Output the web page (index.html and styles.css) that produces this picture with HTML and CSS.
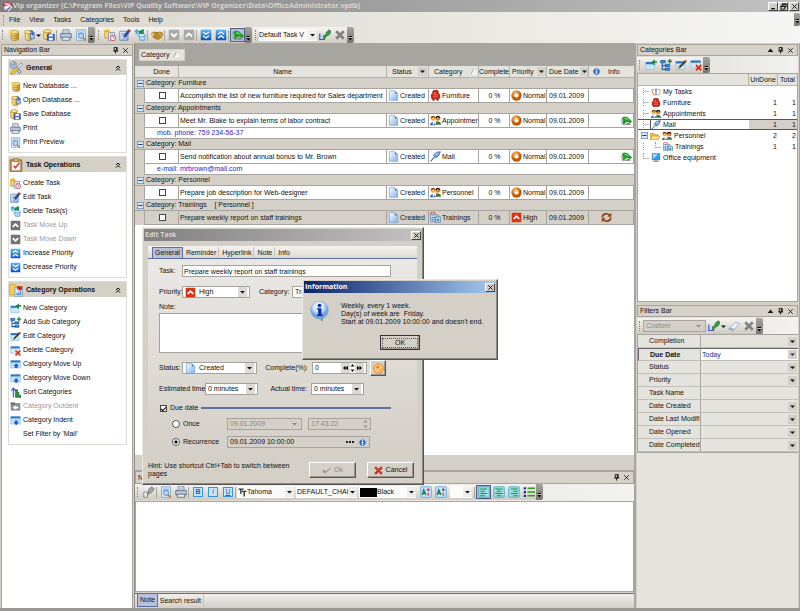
FILE: index.html
```html
<!DOCTYPE html>
<html lang="en">
<head>
    <meta charset="UTF-8">
    <meta name="viewport" content="width=device-width, initial-scale=1.0">
    <title>Vip organizer</title>
    <link rel="stylesheet" href="styles.css">
</head>
<body>
<!-- icon sprite -->
<svg class="sprite" xmlns="http://www.w3.org/2000/svg">
    <defs>
        <linearGradient id="gBlue" x1="0" y1="0" x2="0" y2="1"><stop offset="0" stop-color="#5db4f4"/><stop offset="1" stop-color="#0a51c4"/></linearGradient>
        <linearGradient id="gPage" x1="0" y1="0" x2="1" y2="1"><stop offset="0" stop-color="#ffffff"/><stop offset="1" stop-color="#7fb2ea"/></linearGradient>
        <linearGradient id="gYellow" x1="0" y1="0" x2="1" y2="0"><stop offset="0" stop-color="#fff0a0"/><stop offset="1" stop-color="#c98a14"/></linearGradient>
        <radialGradient id="gOrange" cx=".4" cy=".3"><stop offset="0" stop-color="#ffc070"/><stop offset="1" stop-color="#c55a00"/></radialGradient>
        <radialGradient id="gBall" cx=".45" cy=".3"><stop offset="0" stop-color="#ffffff"/><stop offset=".6" stop-color="#cfe4f8"/><stop offset="1" stop-color="#6fa3dc"/></radialGradient>
    </defs>
    <symbol id="logo" viewBox="0 0 16 16"><path d="M1 3l8-2 6 5-5 4-8-2z" fill="#d8304a"/><path d="M3 8l8-3 4 4-5 6-6-2z" fill="#e8e4ea"/><path d="M4 4l7 1M5 9l6 2" stroke="#fff" stroke-width="2"/><path d="M6 14l6-5" stroke="#5b62b5" stroke-width="2"/></symbol>
    <symbol id="db" viewBox="0 0 16 16"><path d="M4 4v9c0 3 10 3 10 0V4z" fill="url(#gYellow)" stroke="#b07c15"/><ellipse cx="9" cy="4" rx="5" ry="2" fill="#fff2b4" stroke="#b07c15"/><path d="M4 8c1 2 9 2 10 0M4 11c1 2 9 2 10 0" fill="none" stroke="#b07c15"/><path d="M4 0l1 3 3 1-3 1-1 3-1-3-3-1 3-1z" fill="#ffc928"/></symbol>
    <symbol id="dbopen" viewBox="0 0 16 16"><path d="M3 4v9c0 3 9 3 9 0V4z" fill="url(#gYellow)" stroke="#b07c15"/><ellipse cx="7" cy="4" rx="5" ry="2" fill="#fff2b4" stroke="#b07c15"/><path d="M10 6h5v7h-5z" fill="#b8d2f2" stroke="#3b66a8"/><path d="M8 4c3-4 6-2 6 1l2-1-3 5-3-4h2c0-2-2-2-4-1z" fill="#2f67bd"/></symbol>
    <symbol id="dbsave" viewBox="0 0 16 16"><path d="M1 3v9c0 3 9 3 9 0V3z" fill="url(#gYellow)" stroke="#b07c15"/><ellipse cx="6" cy="3" rx="5" ry="2" fill="#fff2b4" stroke="#b07c15"/><path d="M6 7h9v8H6z" fill="#4b6fd0" stroke="#233f92"/><path d="M8 7h5v3H8zM8 12h5v3H8z" fill="#fff"/></symbol>
    <symbol id="print" viewBox="0 0 16 16"><path d="M4 1h8v6H4z" fill="#fff" stroke="#5a6b85"/><path d="M1 6h14v6H1z" fill="#b9c6da" stroke="#4f6078"/><path d="M3 11h10v4H3z" fill="#e8f0fa" stroke="#4f6078"/><path d="M5 3h6M5 5h6" stroke="#8da2c0"/></symbol>
    <symbol id="preview" viewBox="0 0 16 16"><path d="M2 1h12v14H2z" fill="#d8eafc" stroke="#7a9bc5"/><path d="M4 4h8M4 6h8" stroke="#7fa5d5"/><circle cx="8" cy="9" r="3.5" fill="#b4dcff" stroke="#3f72b4"/><path d="M10.500 11.500l4 4" stroke="#c77a2f" stroke-width="2"/></symbol>
    <symbol id="newtask" viewBox="0 0 16 16"><path d="M1 3h6l1 2h5v7H1z" fill="#ffd968" stroke="#c29321"/><path d="M6 5h8v10H6z" fill="#e4eefb" stroke="#6d86bc"/><path d="M8 8h4M8 10h4" stroke="#7c95ce"/><circle cx="12" cy="12" r="3.500" fill="#fff" stroke="#d02b3b"/><path d="M12 10v2h2" stroke="#d02b3b" fill="none"/><path d="M4 0v5M1 2h6" stroke="#ffb300" stroke-width="1.500"/></symbol>
    <symbol id="edittask" viewBox="0 0 16 16"><path d="M1 3h11v12H1z" fill="url(#gPage)" stroke="#4d79b8"/><path d="M3 6h6M3 8h5" stroke="#6a96d4"/><path d="M5 13l1-4 6-8 3 2-6 8z" fill="#2e4c8d"/><path d="M12 1l1-1 3 2-1 2z" fill="#e0442e"/><path d="M5 13l1-3 2 1z" fill="#ffdfa0"/></symbol>
    <symbol id="deltask" viewBox="0 0 16 16"><path d="M6 8h9l-1 7H8z" fill="#b7dcfa" stroke="#4c8dcc"/><ellipse cx="10" cy="8" rx="5" ry="2" fill="#e4f4ff" stroke="#4c8dcc"/><path d="M0 3l4-3 3 3-2 1v3H2V4z" fill="#48a8e8"/><path d="M6 3l7-3v7l-3-1-3 1z" fill="#1d8a3f"/></symbol>
    <symbol id="shake" viewBox="0 0 16 16"><path d="M0 6l4-2 4 1 4-1 4 2-3 6-4 2-6-3z" fill="#d9a13a" stroke="#8a5d14"/><path d="M5 7l3-1 4 4M4 9l4 3M7 8l4 4" stroke="#7a4c10" fill="none"/><path d="M0 6l3-1v5l-2-1z" fill="#f2d474"/></symbol>
    <symbol id="gdown" viewBox="0 0 16 16"><rect x="1" y="1" width="14" height="14" rx="1" fill="#a9a9a9"/><path d="M4 6l4 4 4-4" fill="none" stroke="#fff" stroke-width="2.500"/></symbol>
    <symbol id="gup" viewBox="0 0 16 16"><rect x="1" y="1" width="14" height="14" rx="1" fill="#a9a9a9"/><path d="M4 10l4-4 4 4" fill="none" stroke="#fff" stroke-width="2.500"/></symbol>
    <symbol id="ddown" viewBox="0 0 16 16"><rect x="1" y="1" width="14" height="14" rx="1" fill="#737373"/><path d="M4 6l4 4 4-4" fill="none" stroke="#fff" stroke-width="2.500"/></symbol>
    <symbol id="dup" viewBox="0 0 16 16"><rect x="1" y="1" width="14" height="14" rx="1" fill="#737373"/><path d="M4 10l4-4 4 4" fill="none" stroke="#fff" stroke-width="2.500"/></symbol>
    <symbol id="bdown" viewBox="0 0 16 16"><rect x="1" y="1" width="14" height="14" rx="1" fill="url(#gBlue)"/><path d="M4 4l4 3 4-3M4 9l4 3 4-3" fill="none" stroke="#fff" stroke-width="1.700"/></symbol>
    <symbol id="bup" viewBox="0 0 16 16"><rect x="1" y="1" width="14" height="14" rx="1" fill="url(#gBlue)"/><path d="M4 7l4-3 4 3M4 12l4-3 4 3" fill="none" stroke="#fff" stroke-width="1.700"/></symbol>
    <symbol id="noteflag" viewBox="0 0 16 16"><path d="M3 14h11l-2-3z" fill="#777"/><path d="M1 13V5l3-3 5 1 7 6-2 3-4-2-3 1-3 3z" fill="#1f9a2c"/><path d="M4 5l4-1 4 4-4-1z" fill="#6fd36a"/><path d="M1 6h2v8H1z" fill="#b8b8b8"/></symbol>
    <symbol id="viewsave" viewBox="0 0 16 16"><path d="M1 6v8h6v-4" fill="#c9d6fa" stroke="#4451b8" stroke-width="1.500"/><path d="M6 9l3-1 1-4 4-3 2 3-3 4-4 2-2 4z" fill="#35a046" stroke="#1c6b2a"/></symbol>
    <symbol id="xgray" viewBox="0 0 16 16"><path d="M3 3l10 10M13 3L3 13" stroke="#808080" stroke-width="3.500"/></symbol>
    <symbol id="xred" viewBox="0 0 16 16"><path d="M2 2l12 12M14 2L2 14" stroke="#d9260e" stroke-width="4"/><path d="M4 3l9 9" stroke="#ff7a55"/></symbol>
    <symbol id="check" viewBox="0 0 16 16"><path d="M1 9l4 4L15 4l-9 6-3-3z" fill="#8c8c8c" stroke="#8c8c8c"/></symbol>
    <symbol id="close" viewBox="0 0 16 16"><path d="M3 3l10 10M13 3L3 13" stroke="currentColor" stroke-width="2"/></symbol>
    <symbol id="pin" viewBox="0 0 16 16"><path d="M5 1h7v8H5zM3 9h11M8 9v6M10 1v8" fill="none" stroke="currentColor" stroke-width="2"/></symbol>
    <symbol id="min" viewBox="0 0 16 16"><path d="M3 13h8" stroke="#000" stroke-width="3"/></symbol>
    <symbol id="restore" viewBox="0 0 16 16"><path d="M5 6V2h9v7h-3M2 7h9v7H2zM2 8h9M5 3h9" fill="none" stroke="#000" stroke-width="2"/></symbol>
    <symbol id="down" viewBox="0 0 10 10"><path d="M0 3h10L5 8z" fill="currentColor"/></symbol>
    <symbol id="up" viewBox="0 0 10 10"><path d="M1 7h8L5 2z" fill="currentColor"/></symbol>
    <symbol id="more" viewBox="0 0 10 10"><path d="M1 1h8v2H1z" fill="#fff"/><path d="M1 0h7v2H1zM1 4h7L5 9z" fill="#000"/></symbol>
    <symbol id="asc" viewBox="0 0 16 16"><path d="M2 13L8 2l6 11z" fill="#efeeea" stroke="#fff" stroke-width="2"/><path d="M2 14L8 2" stroke="#9d9c97" stroke-width="2"/></symbol>
    <symbol id="chev" viewBox="0 0 16 16"><path d="M4 8l4-4 4 4M4 13l4-4 4 4" fill="none" stroke="#000" stroke-width="2"/></symbol>
    <symbol id="page" viewBox="0 0 16 16"><path d="M2 1h8l4 4v10H2z" fill="url(#gPage)" stroke="#6f9fd8"/><path d="M10 1v4h4z" fill="#4d86cc"/></symbol>
    <symbol id="furniture" viewBox="0 0 16 16"><path d="M4 2c0-2 8-2 8 0v4h2v6h-2v3h-2v-2H6v2H4v-3H2V6h2z" fill="#d62218" stroke="#941109"/><path d="M5 7h6M5 10h6" stroke="#ff9d86"/><path d="M6 3h2v2H6z" fill="#ff8c76"/></symbol>
    <symbol id="users" viewBox="0 0 16 16"><circle cx="4.500" cy="5" r="3.500" fill="#f4b255"/><path d="M1 5c0-5 7-5 7 0l-3-2z" fill="#7b3c10"/><path d="M0 15c0-6 8-6 8 0z" fill="#2f62d0"/><circle cx="11.500" cy="5" r="3.500" fill="#d08c3a"/><path d="M8 5c0-5 7-5 7 0l-3-2z" fill="#161616"/><path d="M8 14c0-6 8-6 8 0z" fill="#238037"/><path d="M4 9l3 4-3 1z" fill="#fff"/><path d="M8 9l3 0-1 3z" fill="#e23c2d"/></symbol>
    <symbol id="mail" viewBox="0 0 16 16"><path d="M1 15l6-7" stroke="#365da3" stroke-width="1.500"/><path d="M5 6l4-4 6-1-2 5-4 4z" fill="#6fa6e8" stroke="#24509c"/><path d="M8 5l4-2" stroke="#fff"/></symbol>
    <symbol id="training" viewBox="0 0 16 16"><path d="M1 4h9v10H1z" fill="#fff" stroke="#4278c4"/><path d="M1 8h9M4 4v10M7 4v10M1 11h9" stroke="#4278c4"/><path d="M1 4c0-5 6-5 6-1" fill="none" stroke="#d64545" stroke-width="1.500"/><path d="M8 7h7v8H8z" fill="#bfdcf8" stroke="#3a6fb5"/><path d="M10 10h3v3h-3z" fill="#2c9e55"/><path d="M9 2l5 3-4 1z" fill="#e8a042"/></symbol>
    <symbol id="monitor" viewBox="0 0 16 16"><path d="M2 1h12v10H2z" fill="#2f9be6" stroke="#50657b"/><path d="M3 2h8L4 9z" fill="#a6e0ff"/><path d="M5 12h6l2 3H3z" fill="#8a99aa"/></symbol>
    <symbol id="mytasks" viewBox="0 0 16 16"><path d="M1 4l5 0 2 3 2-3h5l-2 9-4-1-4 1z" fill="#fff" stroke="#d08a3d"/><path d="M8 2v11" stroke="#5f8fd0" stroke-width="2"/><path d="M1 5l3 8" stroke="#e9a04f" stroke-width="1.500"/></symbol>
    <symbol id="folder" viewBox="0 0 16 16"><path d="M1 4h5l1 2h6v8H1z" fill="#f0bf3c" stroke="#b98714"/><path d="M3 8h13l-3 6H1z" fill="#ffe58a" stroke="#c99a22"/></symbol>
    <symbol id="normal" viewBox="0 0 16 16"><circle cx="8" cy="8" r="7.500" fill="url(#gOrange)"/><circle cx="8" cy="8" r="3" fill="#fff"/></symbol>
    <symbol id="high" viewBox="0 0 16 16"><rect x="1" y="1" width="14" height="14" rx="1" fill="#de3313"/><path d="M4 10l4-4 4 4" fill="none" stroke="#fff" stroke-width="2.500"/></symbol>
    <symbol id="info" viewBox="0 0 16 16"><path d="M8 0l8 8-8 8-8-8z" fill="#a8c8ee"/><circle cx="8" cy="8" r="5.500" fill="#2a6bc8"/><path d="M8 6v6M8 3v2" stroke="#fff" stroke-width="2.500"/></symbol>
    <symbol id="recur" viewBox="0 0 16 16"><path d="M2 8c0-6 8-7 11-3M14 8c0 6-8 7-11 3" fill="none" stroke="#8a4312" stroke-width="2.500"/><path d="M15 1v6H9zM1 15V9h6z" fill="#8a4312"/></symbol>
    <symbol id="cnew" viewBox="0 0 16 16"><path d="M1 5h12v9H1z" fill="#c8e8fc" stroke="#8fc0e6"/><path d="M1 4h11v3H1z" fill="#2d78c8"/><path d="M12 1v7M9 4h7" stroke="#1c8a2b" stroke-width="2"/></symbol>
    <symbol id="csub" viewBox="0 0 16 16"><path d="M1 2h6v3H1zM7 7h6v3H7zM7 12h6v3H7z" fill="#3b8ae0" stroke="#1a55a4"/><path d="M3 5v9h4M3 9h4" fill="none" stroke="#1a55a4" stroke-width="1.500"/><path d="M13 0v6M10 3h6" stroke="#1c8a2b" stroke-width="2"/></symbol>
    <symbol id="cedit" viewBox="0 0 16 16"><path d="M1 4h12v10H1z" fill="#c8e8fc" stroke="#8fc0e6"/><path d="M1 3h11v3H1z" fill="#2d78c8"/><path d="M5 12l9-9" stroke="#47372a" stroke-width="2.500"/><path d="M13 4l2-2" stroke="#d9342a" stroke-width="3"/><path d="M3 14l2-4 2 2z" fill="#f0b040"/></symbol>
    <symbol id="cdel" viewBox="0 0 16 16"><path d="M1 3h13v9H1z" fill="#d4ecfc" stroke="#8fc0e6"/><path d="M1 2h13v3H1z" fill="#2d78c8"/><path d="M8 8l7 7M15 8l-7 7" stroke="#e0311c" stroke-width="2.500"/></symbol>
    <symbol id="cup" viewBox="0 0 16 16"><path d="M1 3h14v10H1z" fill="#c4e2fb" stroke="#8fc0e6"/><path d="M1 2h14v3H1z" fill="#2d78c8"/><path d="M9 6l4 4h-2v3H7v-3H5z" fill="#1c5fd0"/></symbol>
    <symbol id="cdown" viewBox="0 0 16 16"><path d="M1 3h14v10H1z" fill="#c4e2fb" stroke="#8fc0e6"/><path d="M1 2h14v3H1z" fill="#2d78c8"/><path d="M9 15l4-4h-2V8H7v3H5z" fill="#1c5fd0"/></symbol>
    <symbol id="sort" viewBox="0 0 16 16"><path d="M4 15V5H1l4-5 4 5H6v10z" fill="#3c6fd8"/><path d="M8 4h3v3H8zM8 8h5v3H8zM8 12h8v3H8z" fill="#2b9c3d" stroke="#14641f"/></symbol>
    <symbol id="cout" viewBox="0 0 16 16"><path d="M1 3h14v11H1z" fill="#8e8e8e"/><path d="M1 2h6v3H1z" fill="#6b6b6b"/><path d="M4 9l4-3v2h4v3H8v2z" fill="#fff"/></symbol>
    <symbol id="tools" viewBox="0 0 24 24"><path d="M3 3l4 4 3-3-4-3c5-1 8 3 6 7l9 10-3 4L8 12C4 14 0 9 3 3z" fill="#a9bddb" stroke="#536b96"/><path d="M14 10l7-7 2 3-7 7z" fill="#dfe6f1" stroke="#5e6f8d"/><path d="M13 11l3 3-9 9c-3 1-5-2-3-4z" fill="#f5c22f" stroke="#a97a10"/></symbol>
    <symbol id="clip" viewBox="0 0 24 24"><path d="M2 3h20v20H2z" fill="#c08b3a" stroke="#7d5518"/><path d="M5 6h14v15H5z" fill="#fbfbff" stroke="#bbb"/><path d="M8 1h8v5H8z" fill="#e3b85c" stroke="#7d5518"/><path d="M8 13l3 4 7-9" fill="none" stroke="#d8262b" stroke-width="2.500"/></symbol>
    <symbol id="catbig" viewBox="0 0 24 24"><path d="M1 3h9l2 3h9v14H1z" fill="#f7cf57" stroke="#c29321"/><path d="M10 8h13v15H10z" fill="#d4e6fa" stroke="#5f86bd"/><path d="M13 17h4v4h-4zM18 14h3v7h-3z" fill="#4b8ede"/><path d="M14 5l5 1 4-1-1 7-4 1-4-3z" fill="#cf2417"/></symbol>
    <symbol id="eraser" viewBox="0 0 16 16"><path d="M1 12l9-9 5 2-8 9z" fill="#eef2fa" stroke="#8899bb"/><path d="M1 12l6 2 1-2-5-2z" fill="#8fa7d8"/></symbol>
    <symbol id="stamp" viewBox="0 0 16 16"><path d="M1 8l5 0v7H1z" fill="#e8e8e8" stroke="#777"/><path d="M6 12l2-8 4-3 3 3-4 5-3 1z" fill="#a8a8a8" stroke="#666"/></symbol>
    <symbol id="fontt" viewBox="0 0 16 16"><path d="M1 2h9M5 2v8M7 6h8M11 6v9" stroke="#333" stroke-width="2.500"/></symbol>
    <symbol id="grow" viewBox="0 0 16 16"><rect x="1" y="1" width="14" height="14" rx="1" fill="#c5e8fb" stroke="#4a9bd6"/><path d="M3 12l2-7 3 7M4 10h3" stroke="#126b35" fill="none" stroke-width="1.500"/><path d="M11 3v4M9 5h4M11 9v4" stroke="#c02a3a" stroke-width="1.500"/></symbol>
    <symbol id="alignl" viewBox="0 0 16 16"><rect x="1" y="1" width="14" height="14" rx="1" fill="#9fe0dc" stroke="#3a9bd0"/><path d="M3 4h9M3 7h6M3 10h9M3 13h6" stroke="#15904a" stroke-width="1.600"/></symbol>
    <symbol id="alignc" viewBox="0 0 16 16"><rect x="1" y="1" width="14" height="14" rx="1" fill="#9fe0dc" stroke="#3a9bd0"/><path d="M3 4h10M5 7h6M3 10h10M5 13h6" stroke="#15904a" stroke-width="1.600"/></symbol>
    <symbol id="alignr" viewBox="0 0 16 16"><rect x="1" y="1" width="14" height="14" rx="1" fill="#9fe0dc" stroke="#3a9bd0"/><path d="M4 4h9M7 7h6M4 10h9M7 13h6" stroke="#15904a" stroke-width="1.600"/></symbol>
    <symbol id="list" viewBox="0 0 16 16"><path d="M1 3h3M1 8h3M1 13h3" stroke="#1b2c9c" stroke-width="3"/><path d="M6 3h10M6 8h10M6 13h10" stroke="#2f9a1f" stroke-width="2"/></symbol>
    <symbol id="bigi" viewBox="0 0 32 32"><path d="M16 24l4 8 2-9z" fill="#5d7fae"/><circle cx="16" cy="14" r="13.500" fill="url(#gBall)" stroke="#86a9d2"/><path d="M12 11h7v10h2v2h-9v-2h2v-8h-2z" fill="#0d2f9c"/><circle cx="16" cy="7" r="2.800" fill="#0d2f9c"/></symbol>
    <symbol id="done" viewBox="0 0 16 16"><circle cx="8" cy="8" r="7.500" fill="#f08a24"/><circle cx="8" cy="8" r="5" fill="none" stroke="#ffe0b0" stroke-width="1.500"/><path d="M5 8l2 3 5-6" stroke="#fff" fill="none" stroke-width="1.500"/></symbol>
    <symbol id="spin" viewBox="0 0 10 20"><path d="M1 7h8L5 2zM1 13h8l-4 5z" fill="currentColor"/></symbol>
    <symbol id="prev" viewBox="0 0 16 16"><path d="M8 1v14L0 8zM16 1v14L8 8z" fill="#000"/></symbol>
    <symbol id="next" viewBox="0 0 16 16"><path d="M0 1v14l8-7zM8 1v14l8-7z" fill="#000"/></symbol>
    <symbol id="minus" viewBox="0 0 10 10"><rect x=".5" y=".5" width="9" height="9" fill="#d9e7fa" stroke="#5b83bd"/><path d="M2 5h6" stroke="#17428f" stroke-width="1.500"/></symbol>
</svg>

<div class="app">
    <header class="titlebar">
        <svg class="icon"><use href="#logo"/></svg>
        <h1 class="titlebar-text">Vip organizer [C:\Program Files\VIP Quality Software\VIP Organizer\Data\OfficeAdministrator.vpdb]</h1>
        <button class="win-btn" aria-label="Minimize"><svg><use href="#min"/></svg></button>
        <button class="win-btn" aria-label="Restore"><svg><use href="#restore"/></svg></button>
        <button class="win-btn win-close" aria-label="Close"><svg><use href="#close"/></svg></button>
    </header>

    <div class="topbars">
        <nav class="menu">
            <span class="grip"></span>
            <button>File</button>
            <button>View</button>
            <button>Tasks</button>
            <button>Categories</button>
            <button>Tools</button>
            <button>Help</button>
            <span class="overflow menu-overflow"><svg><use href="#more"/></svg></span>
        </nav>
        <div class="toolbars">
            <div class="toolbar">
                <span class="grip"></span>
                <button aria-label="New database"><svg class="icon"><use href="#db"/></svg></button>
                <button aria-label="Open database"><svg class="icon"><use href="#dbopen"/></svg></button>
                <svg class="arrow"><use href="#down"/></svg>
                <button aria-label="Save database"><svg class="icon"><use href="#dbsave"/></svg></button>
                <span class="sep"></span>
                <button aria-label="Print"><svg class="icon"><use href="#print"/></svg></button>
                <button aria-label="Print preview"><svg class="icon"><use href="#preview"/></svg></button>
                <span class="overflow"><svg><use href="#more"/></svg></span>
            </div>
            <div class="toolbar">
                <span class="grip"></span>
                <button aria-label="Create task"><svg class="icon"><use href="#newtask"/></svg></button>
                <button aria-label="Edit task"><svg class="icon"><use href="#edittask"/></svg></button>
                <button aria-label="Delete task"><svg class="icon"><use href="#deltask"/></svg></button>
                <span class="sep"></span>
                <button aria-label="Assign"><svg class="icon"><use href="#shake"/></svg></button>
                <span class="sep"></span>
                <button aria-label="Move down"><svg class="icon"><use href="#gdown"/></svg></button>
                <button aria-label="Move up"><svg class="icon"><use href="#gup"/></svg></button>
                <span class="sep"></span>
                <button aria-label="Decrease priority"><svg class="icon"><use href="#bdown"/></svg></button>
                <button aria-label="Increase priority"><svg class="icon"><use href="#bup"/></svg></button>
                <span class="sep"></span>
                <button class="on" aria-label="Show notes"><svg class="icon"><use href="#noteflag"/></svg></button>
                <span class="overflow"><svg><use href="#more"/></svg></span>
            </div>
            <div class="toolbar">
                <span class="grip"></span>
                <div class="combo flat view-combo">
                    <select aria-label="View"><option>Default Task V</option></select>
                    <svg class="arrow"><use href="#down"/></svg>
                </div>
                <button aria-label="Save view"><svg class="icon"><use href="#viewsave"/></svg></button>
                <button aria-label="Delete view"><svg class="icon"><use href="#xgray"/></svg></button>
                <span class="overflow"><svg><use href="#more"/></svg></span>
            </div>
        </div>
    </div>

    <div class="workspace">
        <aside class="nav">
            <div class="panel-head">
                <h2>Navigation Bar</h2>
                <svg class="mini"><use href="#pin"/></svg>
                <svg class="mini"><use href="#close"/></svg>
            </div>
            <div class="nav-body">
                <section class="nav-group">
                    <h3><svg><use href="#tools"/></svg><span>General</span><svg class="chev"><use href="#chev"/></svg></h3>
                    <ul>
                        <li><svg class="icon"><use href="#db"/></svg><a href="#">New Database ...</a></li>
                        <li><svg class="icon"><use href="#dbopen"/></svg><a href="#">Open Database ...</a></li>
                        <li><svg class="icon"><use href="#dbsave"/></svg><a href="#">Save Database</a></li>
                        <li><svg class="icon"><use href="#print"/></svg><a href="#">Print</a></li>
                        <li><svg class="icon"><use href="#preview"/></svg><a href="#">Print Preview</a></li>
                    </ul>
                </section>
                <section class="nav-group">
                    <h3><svg><use href="#clip"/></svg><span>Task Operations</span><svg class="chev"><use href="#chev"/></svg></h3>
                    <ul>
                        <li><svg class="icon"><use href="#newtask"/></svg><a href="#">Create Task</a></li>
                        <li><svg class="icon"><use href="#edittask"/></svg><a href="#">Edit Task</a></li>
                        <li><svg class="icon"><use href="#deltask"/></svg><a href="#">Delete Task(s)</a></li>
                        <li class="off"><svg class="icon"><use href="#dup"/></svg><a href="#">Task Move Up</a></li>
                        <li class="off"><svg class="icon"><use href="#ddown"/></svg><a href="#">Task Move Down</a></li>
                        <li><svg class="icon"><use href="#bup"/></svg><a href="#">Increase Priority</a></li>
                        <li><svg class="icon"><use href="#bdown"/></svg><a href="#">Decrease Priority</a></li>
                    </ul>
                </section>
                <section class="nav-group">
                    <h3><svg><use href="#catbig"/></svg><span>Category Operations</span><svg class="chev"><use href="#chev"/></svg></h3>
                    <ul>
                        <li><svg class="icon"><use href="#cnew"/></svg><a href="#">New Category</a></li>
                        <li><svg class="icon"><use href="#csub"/></svg><a href="#">Add Sub Category</a></li>
                        <li><svg class="icon"><use href="#cedit"/></svg><a href="#">Edit Category</a></li>
                        <li><svg class="icon"><use href="#cdel"/></svg><a href="#">Delete Category</a></li>
                        <li><svg class="icon"><use href="#cup"/></svg><a href="#">Category Move Up</a></li>
                        <li><svg class="icon"><use href="#cdown"/></svg><a href="#">Category Move Down</a></li>
                        <li><svg class="icon"><use href="#sort"/></svg><a href="#">Sort Categories</a></li>
                        <li class="off"><svg class="icon"><use href="#cout"/></svg><a href="#">Category Outdent</a></li>
                        <li><svg class="icon"><use href="#cdown"/></svg><a href="#">Category Indent</a></li>
                        <li><svg class="icon"></svg><a href="#">Set Filter by 'Mail'</a></li>
                    </ul>
                </section>
            </div>
        </aside>

        <main class="center">
            <div class="grouping"><button class="group-chip">Category <svg class="mini"><use href="#asc"/></svg></button></div>
            <div class="grid-area">
                <table class="tasks">
                    <colgroup>
                        <col class="c-indent"><col class="c-done"><col><col class="c-status"><col class="c-cat">
                        <col class="c-comp"><col class="c-prio"><col class="c-due"><col class="c-info">
                    </colgroup>
                    <thead>
                        <tr>
                            <th></th>
                            <th>Done</th>
                            <th>Name</th>
                            <th><div class="cell spread">Status<svg class="drop"><use href="#down"/></svg></div></th>
                            <th><div class="cell spread">Category<svg class="mini"><use href="#asc"/></svg></div></th>
                            <th>Complete</th>
                            <th><div class="cell spread tight">Priority<svg class="drop"><use href="#down"/></svg></div></th>
                            <th><div class="cell spread tight">Due Date<svg class="drop"><use href="#down"/></svg></div></th>
                            <th><div class="cell info-head"><svg class="small"><use href="#info"/></svg>Info</div></th>
                        </tr>
                    </thead>
                    <tbody>
                        <tr class="group"><td colspan="9"><div class="cell"><svg class="toggle"><use href="#minus"/></svg>Category: Furniture</div></td></tr>
                        <tr class="task">
                            <td class="indent"></td>
                            <td class="mid"><input type="checkbox" aria-label="Done"></td>
                            <td>Accomplish the list of new furniture required for Sales department</td>
                            <td><div class="cell"><svg class="icon"><use href="#page"/></svg>Created</div></td>
                            <td><div class="cell"><svg class="icon"><use href="#furniture"/></svg>Furniture</div></td>
                            <td class="mid">0 %</td>
                            <td><div class="cell"><svg class="icon"><use href="#normal"/></svg>Normal</div></td>
                            <td class="date">09.01.2009</td>
                            <td></td>
                        </tr>
                        <tr class="group"><td colspan="9"><div class="cell"><svg class="toggle"><use href="#minus"/></svg>Category: Appointments</div></td></tr>
                        <tr class="task">
                            <td class="indent"></td>
                            <td class="mid"><input type="checkbox" aria-label="Done"></td>
                            <td>Meet Mr. Blake to explain terms of labor contract</td>
                            <td><div class="cell"><svg class="icon"><use href="#page"/></svg>Created</div></td>
                            <td><div class="cell"><svg class="icon"><use href="#users"/></svg>Appointmer</div></td>
                            <td class="mid">0 %</td>
                            <td><div class="cell"><svg class="icon"><use href="#normal"/></svg>Normal</div></td>
                            <td class="date">09.01.2009</td>
                            <td><div class="cell end"><svg class="icon"><use href="#noteflag"/></svg></div></td>
                        </tr>
                        <tr class="memo"><td class="indent"></td><td colspan="8">mob. phone: 759 234-56-37</td></tr>
                        <tr class="group"><td colspan="9"><div class="cell"><svg class="toggle"><use href="#minus"/></svg>Category: Mail</div></td></tr>
                        <tr class="task">
                            <td class="indent"></td>
                            <td class="mid"><input type="checkbox" aria-label="Done"></td>
                            <td>Send notification about annual bonus to Mr. Brown</td>
                            <td><div class="cell"><svg class="icon"><use href="#page"/></svg>Created</div></td>
                            <td><div class="cell"><svg class="icon"><use href="#mail"/></svg>Mail</div></td>
                            <td class="mid">0 %</td>
                            <td><div class="cell"><svg class="icon"><use href="#normal"/></svg>Normal</div></td>
                            <td class="date">09.01.2009</td>
                            <td><div class="cell end"><svg class="icon"><use href="#noteflag"/></svg></div></td>
                        </tr>
                        <tr class="memo"><td class="indent"></td><td colspan="8">e-mail: mrbrown@mail.com</td></tr>
                        <tr class="group"><td colspan="9"><div class="cell"><svg class="toggle"><use href="#minus"/></svg>Category: Personnel</div></td></tr>
                        <tr class="task">
                            <td class="indent"></td>
                            <td class="mid"><input type="checkbox" aria-label="Done"></td>
                            <td>Prepare job description for Web-designer</td>
                            <td><div class="cell"><svg class="icon"><use href="#page"/></svg>Created</div></td>
                            <td><div class="cell"><svg class="icon"><use href="#users"/></svg>Personnel</div></td>
                            <td class="mid">0 %</td>
                            <td><div class="cell"><svg class="icon"><use href="#normal"/></svg>Normal</div></td>
                            <td class="date">09.01.2009</td>
                            <td></td>
                        </tr>
                        <tr class="group"><td colspan="9"><div class="cell"><svg class="toggle"><use href="#minus"/></svg>Category: Trainings &nbsp;&nbsp; [ Personnel ]</div></td></tr>
                        <tr class="task current">
                            <td class="indent"></td>
                            <td class="mid"><input type="checkbox" aria-label="Done"></td>
                            <td>Prepare weekly report on staff trainings</td>
                            <td><div class="cell"><svg class="icon"><use href="#page"/></svg>Created</div></td>
                            <td><div class="cell"><svg class="icon"><use href="#training"/></svg>Trainings</div></td>
                            <td class="mid">0 %</td>
                            <td><div class="cell"><svg class="icon"><use href="#high"/></svg>High</div></td>
                            <td class="date">09.01.2009</td>
                            <td><div class="cell recur"><svg class="icon"><use href="#recur"/></svg></div></td>
                        </tr>
                    </tbody>
                </table>
            </div>
            <div class="grid-foot"></div>
            <section class="notes">
                <div class="panel-head">
                    <h2>Note</h2>
                    <svg class="mini"><use href="#pin"/></svg>
                    <svg class="mini"><use href="#close"/></svg>
                </div>
                <div class="note-tools">
                    <div class="toolbar">
                        <span class="grip"></span>
                        <button aria-label="Save note"><svg class="icon"><use href="#stamp"/></svg></button>
                        <span class="sep"></span>
                        <button aria-label="Preview note"><svg class="icon"><use href="#preview"/></svg></button>
                        <button aria-label="Print note"><svg class="icon"><use href="#print"/></svg></button>
                        <span class="sep"></span>
                        <button class="fmt"><b>B</b></button>
                        <button class="fmt"><i>I</i></button>
                        <button class="fmt"><u>U</u></button>
                        <span class="sep"></span>
                        <div class="combo flat note-combo">
                            <svg class="small"><use href="#fontt"/></svg>
                            <select aria-label="Font"><option>Tahoma</option></select>
                            <svg class="arrow"><use href="#down"/></svg>
                        </div>
                        <div class="combo flat note-combo charset">
                            <select aria-label="Charset"><option>DEFAULT_CHAR</option></select>
                            <svg class="arrow"><use href="#down"/></svg>
                        </div>
                        <div class="combo flat note-combo">
                            <span class="swatch"></span>
                            <select aria-label="Colour"><option>Black</option></select>
                            <svg class="arrow"><use href="#down"/></svg>
                        </div>
                        <button aria-label="Superscript"><svg class="icon"><use href="#grow"/></svg></button>
                        <button aria-label="Subscript"><svg class="icon"><use href="#grow"/></svg></button>
                        <div class="combo flat size-combo">
                            <select aria-label="Size"><option></option></select>
                            <svg class="arrow"><use href="#down"/></svg>
                        </div>
                        <span class="sep"></span>
                        <button class="on" aria-label="Align left"><svg class="icon"><use href="#alignl"/></svg></button>
                        <button aria-label="Align center"><svg class="icon"><use href="#alignc"/></svg></button>
                        <button aria-label="Align right"><svg class="icon"><use href="#alignr"/></svg></button>
                        <button aria-label="Bullets"><svg class="icon"><use href="#list"/></svg></button>
                        <span class="overflow"><svg><use href="#more"/></svg></span>
                    </div>
                </div>
                <textarea class="editor" aria-label="Note text"></textarea>
                <div class="bottom-tabs">
                    <button class="active">Note</button>
                    <button>Search result</button>
                </div>
            </section>
        </main>

        <aside class="side">
            <section class="cats">
                <div class="panel-head">
                    <h2>Categories Bar</h2>
                    <svg class="mini"><use href="#up"/></svg>
                    <svg class="mini"><use href="#pin"/></svg>
                    <svg class="mini"><use href="#close"/></svg>
                </div>
                <div class="side-tools">
                    <div class="toolbar">
                        <span class="grip"></span>
                        <button aria-label="New category"><svg class="icon"><use href="#cnew"/></svg></button>
                        <button aria-label="Add sub category"><svg class="icon"><use href="#csub"/></svg></button>
                        <button aria-label="Edit category"><svg class="icon"><use href="#cedit"/></svg></button>
                        <button aria-label="Delete category"><svg class="icon"><use href="#cdel"/></svg></button>
                        <span class="overflow"><svg><use href="#more"/></svg></span>
                    </div>
                </div>
                <div class="tree-box">
                    <table class="tree">
                        <colgroup><col><col class="c-undone"><col class="c-total"></colgroup>
                        <thead><tr><th></th><th>UnDone</th><th>Total</th></tr></thead>
                        <tbody>
                            <tr><td><div class="node"><span class="line"></span><svg class="icon"><use href="#mytasks"/></svg>My Tasks</div></td><td></td><td></td></tr>
                            <tr><td><div class="node"><span class="line"></span><svg class="icon"><use href="#furniture"/></svg>Furniture</div></td><td>1</td><td>1</td></tr>
                            <tr><td><div class="node"><span class="line"></span><svg class="icon"><use href="#users"/></svg>Appointments</div></td><td>1</td><td>1</td></tr>
                            <tr class="picked"><td><div class="node"><span class="line"></span><span class="pick"><svg class="icon"><use href="#mail"/></svg>Mail</span></div></td><td>1</td><td>1</td></tr>
                            <tr><td><div class="node"><svg class="toggle"><use href="#minus"/></svg><svg class="icon"><use href="#folder"/></svg><svg class="icon"><use href="#users"/></svg>Personnel</div></td><td>2</td><td>2</td></tr>
                            <tr><td><div class="node"><span class="line pass"></span><span class="line last"></span><svg class="icon"><use href="#training"/></svg>Trainings</div></td><td>1</td><td>1</td></tr>
                            <tr><td><div class="node"><span class="line last"></span><svg class="icon"><use href="#monitor"/></svg>Office equipment</div></td><td></td><td></td></tr>
                        </tbody>
                    </table>
                </div>
            </section>
            <section class="filters">
                <div class="panel-head">
                    <h2>Filters Bar</h2>
                    <svg class="mini"><use href="#up"/></svg>
                    <svg class="mini"><use href="#pin"/></svg>
                    <svg class="mini"><use href="#close"/></svg>
                </div>
                <div class="side-tools">
                    <div class="toolbar">
                        <span class="grip"></span>
                        <div class="combo disabled filter-combo">
                            <select aria-label="Filter" disabled><option>Custom</option></select>
                            <svg class="arrow"><use href="#down"/></svg>
                        </div>
                        <button aria-label="Save filter"><svg class="icon"><use href="#viewsave"/></svg></button>
                        <svg class="arrow"><use href="#down"/></svg>
                        <button aria-label="Clear filter"><svg class="icon"><use href="#eraser"/></svg></button>
                        <button aria-label="Delete filter"><svg class="icon"><use href="#xgray"/></svg></button>
                        <span class="overflow"><svg><use href="#more"/></svg></span>
                    </div>
                </div>
                <table class="filter-table">
                    <colgroup><col class="c-field"><col><col class="c-drop"></colgroup>
                    <tr><th>Completion</th><td></td><td><svg class="drop"><use href="#down"/></svg></td></tr>
                    <tr class="set"><th>Due Date</th><td>Today</td><td><svg class="drop"><use href="#down"/></svg></td></tr>
                    <tr><th>Status</th><td></td><td><svg class="drop"><use href="#down"/></svg></td></tr>
                    <tr><th>Priority</th><td></td><td><svg class="drop"><use href="#down"/></svg></td></tr>
                    <tr><th>Task Name</th><td></td><td></td></tr>
                    <tr><th>Date Created</th><td></td><td><svg class="drop"><use href="#down"/></svg></td></tr>
                    <tr><th>Date Last Modifi</th><td></td><td><svg class="drop"><use href="#down"/></svg></td></tr>
                    <tr><th>Date Opened</th><td></td><td><svg class="drop"><use href="#down"/></svg></td></tr>
                    <tr><th>Date Completed</th><td></td><td><svg class="drop"><use href="#down"/></svg></td></tr>
                </table>
            </section>
        </aside>
    </div>

    <!-- edit task window -->
    <form class="window edit">
        <div class="window-title"><h2>Edit Task</h2><button type="button" class="win-btn" aria-label="Close"><svg><use href="#close"/></svg></button></div>
        <div class="page">
            <div class="tabs">
                <button type="button" class="active">General</button>
                <button type="button">Reminder</button>
                <button type="button">Hyperlink</button>
                <button type="button">Note</button>
                <button type="button">Info</button>
            </div>
            <div class="fields">
                <div class="row">
                    <label class="lead" for="task">Task:</label>
                    <input class="box grow" id="task" type="text" value="Prepare weekly report on staff trainings">
                </div>
                <div class="row">
                    <label class="lead" for="priority">Priority:</label>
                    <div class="combo w-prio">
                        <svg class="icon"><use href="#high"/></svg>
                        <select id="priority"><option>High</option></select>
                        <svg class="arrow"><use href="#down"/></svg>
                    </div>
                    <label class="cat-label" for="category">Category:</label>
                    <div class="combo grow">
                        <select id="category"><option>Trainings</option></select>
                        <svg class="arrow"><use href="#down"/></svg>
                    </div>
                </div>
                <label class="note-label" for="memo">Note:</label>
                <textarea class="box memo-box" id="memo"></textarea>
                <div class="row">
                    <label class="lead" for="status">Status:</label>
                    <div class="combo w-status">
                        <svg class="icon"><use href="#page"/></svg>
                        <select id="status"><option>Created</option></select>
                        <svg class="arrow"><use href="#down"/></svg>
                    </div>
                    <label class="right-label" for="complete">Complete(%):</label>
                    <div class="combo w-time">
                        <input id="complete" type="text" value="0">
                        <svg class="arrow"><use href="#prev"/></svg>
                        <svg class="spin"><use href="#spin"/></svg>
                        <svg class="arrow"><use href="#next"/></svg>
                    </div>
                    <button type="button" class="push done-btn" aria-label="Complete"><svg class="icon"><use href="#done"/></svg></button>
                </div>
                <div class="row">
                    <label class="est-label" for="est">Estimated time:</label>
                    <div class="combo w-est">
                        <select id="est"><option>0 minutes</option></select>
                        <svg class="arrow"><use href="#down"/></svg>
                    </div>
                    <label class="right-label" for="actual">Actual time:</label>
                    <div class="combo w-est">
                        <select id="actual"><option>0 minutes</option></select>
                        <svg class="arrow"><use href="#down"/></svg>
                    </div>
                </div>
                <div class="row due">
                    <input type="checkbox" id="due" checked>
                    <label for="due">Due date</label>
                    <span class="rule"></span>
                </div>
                <div class="row when">
                    <span class="pick-when"><input type="radio" name="when" id="once"><label for="once">Once</label></span>
                    <div class="combo disabled w-date">
                        <select aria-label="Date" disabled><option>09.01.2009</option></select>
                        <svg class="arrow"><use href="#down"/></svg>
                    </div>
                    <div class="combo disabled w-clock">
                        <input type="text" aria-label="Time" value="17:43:22" disabled>
                        <svg class="spin"><use href="#spin"/></svg>
                    </div>
                </div>
                <div class="row when">
                    <span class="pick-when"><input type="radio" name="when" id="rec" checked><label for="rec">Recurrence</label></span>
                    <div class="combo gray w-rec">
                        <input type="text" aria-label="Recurrence start" value="09.01.2009 10:00:00" readonly>
                        <button type="button" class="dots" aria-label="Edit recurrence"><span></span><span></span><span></span></button>
                        <svg class="small"><use href="#info"/></svg>
                    </div>
                </div>
            </div>
        </div>
        <div class="edit-foot">
            <p>Hint: Use shortcut Ctrl+Tab to switch between pages</p>
            <button type="button" class="push" disabled><svg class="small"><use href="#check"/></svg>Ok</button>
            <button type="button" class="push"><svg class="small"><use href="#xred"/></svg>Cancel</button>
        </div>
    </form>

    <!-- recurrence message -->
    <div class="window message" role="dialog">
        <div class="window-title"><h2>Information</h2><button class="win-btn" aria-label="Close"><svg><use href="#close"/></svg></button></div>
        <div class="message-body">
            <svg><use href="#bigi"/></svg>
            <p>Weekly, every 1 week.<br>Day(s) of week are &nbsp;Friday.<br>Start at 09.01.2009 10:00:00 and doesn't end.</p>
        </div>
        <button class="push ok"><span>OK</span></button>
    </div>
</div>
</body>
</html>
```

FILE: styles.css
```css
*{
    margin:0;
    padding:0;
    box-sizing:border-box;
}
body{
    font-family:"Liberation Sans", Arial, sans-serif;
    font-size:7px;
    line-height:8px;
    color:#111;
    background-color:#d4d0c8;
}
h1,h2,h3,th{
    font-size:7px;
    font-weight:normal;
}
button,input,select,textarea{
    font:inherit;
    color:inherit;
    border:none;
    background:none;
    border-radius:0;
    outline:none;
    resize:none;
    min-width:0;
}
select{
    appearance:none;
}
select:disabled{
    opacity:1;
}
ul{
    list-style:none;
}
a{
    color:inherit;
    text-decoration:none;
}
svg{
    display:block;
    flex:none;
}
.sprite{
    position:absolute;
    width:0;
    height:0;
}
.icon{
    width:11px;
    height:11px;
}
.small{
    width:9px;
    height:9px;
}
.mini{
    width:7px;
    height:7px;
}
.toggle{
    width:7px;
    height:7px;
}
.arrow{
    width:5px;
    height:5px;
}
.app{
    position:relative;
    display:flex;
    flex-direction:column;
    height:100vh;
    overflow:hidden;
    border-bottom:3px solid #9a9994;
}

/* title */
.titlebar{
    display:flex;
    align-items:center;
    height:12px;
    padding:0 1px 0 2px;
    background:linear-gradient(to right,#808080,#c2c2c2);
}
.titlebar-text{
    flex:1;
    font-family:"Open Sans", "Liberation Sans", sans-serif;
    font-weight:bold;
    color:#d8d5cd;
    white-space:nowrap;
}
.win-btn{
    display:flex;
    align-items:center;
    justify-content:center;
    width:10px;
    height:9px;
    background:#d4d0c8;
    border:1px solid;
    border-color:#fff #404040 #404040 #fff;
}
.win-btn svg{
    width:7px;
    height:7px;
    color:#000;
}
.win-close{
    margin-left:1px;
}

/* menu and toolbars */
.topbars{
    height:31px;
    background:linear-gradient(to right,#d9d5cc,#f6f6f4);
}
.menu{
    display:flex;
    align-items:center;
    height:15px;
    padding-left:3px;
}
.menu button{
    margin-right:9px;
}
.menu .grip{
    margin-right:4px;
}
.menu .menu-overflow{
    margin-left:auto;
    height:13px;
    width:6px;
}
.grip{
    width:2px;
    height:10px;
    border-left:1px dotted #8b887f;
    margin-right:2px;
}
.toolbars{
    display:flex;
    gap:1px;
}
.toolbar{
    display:flex;
    align-items:center;
    height:16px;
    padding-left:2px;
    background:linear-gradient(#f5f4f1,#cfcbc1);
    border-radius:0 2px 2px 0;
}
.toolbar button{
    display:flex;
    align-items:center;
    justify-content:center;
    width:15px;
    height:14px;
}
.toolbar button .icon{
    width:12px;
    height:12px;
}
.toolbar .on{
    background:#b9c0d4;
    border:1px solid #4e5d85;
}
.sep{
    width:1px;
    height:11px;
    background:#a9a69c;
    margin-right:1px;
}
.overflow{
    display:flex;
    align-items:flex-end;
    justify-content:center;
    width:7px;
    height:16px;
    padding-bottom:2px;
    background:linear-gradient(#a5a49f,#787772);
    border-radius:0 2px 2px 0;
}
.overflow svg{
    width:5px;
    height:5px;
}

/* combo boxes */
.combo{
    display:flex;
    align-items:center;
    height:12px;
    padding:0 2px;
    background:#fff;
    border:1px solid #a5a39c;
}
.combo select,.combo input{
    flex:1;
    width:0;
    height:10px;
    line-height:10px;
}
.combo .arrow{
    width:9px;
    height:10px;
    padding:2px;
    background:#dddad3;
}
.combo .icon{
    margin-right:3px;
}
.combo .spin{
    width:5px;
    height:10px;
}
.combo.flat{
    border:none;
    background:#fbfbfa;
}
.flat .arrow{
    background:#eeede9;
}
.disabled,.gray{
    background:#d4d0c8;
}
.disabled{
    color:#8d8a83;
}
.disabled .arrow{
    background:none;
}
.view-combo{
    width:58px;
    padding:0;
}
.note-combo{
    width:57px;
    margin-right:2px;
    padding:0 0 0 1px;
}
.charset{
    width:61px;
}
.size-combo{
    width:22px;
    padding:0;
    margin:0 2px;
}
.swatch{
    width:17px;
    height:9px;
    background:#000;
}

/* panels */
.workspace{
    flex:1;
    display:flex;
    min-height:0;
}
.panel-head{
    display:flex;
    align-items:center;
    gap:3px;
    height:12px;
    padding:0 3px 0 2px;
    background:#d6d1c9;
    border:1px solid #a7a39b;
}
.panel-head h2{
    flex:1;
}
.nav{
    display:flex;
    flex-direction:column;
    width:135px;
    padding:1px 1px 0;
    border-right:1px solid #8d8c87;
}
.nav-body{
    flex:1;
    display:flex;
    flex-direction:column;
    gap:3px;
    padding:3px 5px 0 6px;
    background:#fff;
    border-left:1px solid #a7a39b;
    border-right:1px solid #a7a39b;
}
.nav-group{
    border:1px solid #dedbd4;
}
.nav-group h3{
    display:flex;
    align-items:center;
    height:15px;
    padding-right:4px;
    background:#d4d0c8;
    font-weight:bold;
}
.nav-group h3 svg{
    width:14px;
    height:14px;
}
.nav-group h3 span{
    flex:1;
    padding-left:3px;
}
.nav-group h3 .chev{
    width:8px;
    height:8px;
}
.nav-group ul{
    padding:4px 0 3px 1px;
}
.nav-group li{
    display:flex;
    align-items:center;
    gap:2px;
    height:14px;
}
.off{
    color:#999;
}

/* task grid */
.center{
    flex:1;
    display:flex;
    flex-direction:column;
    min-width:0;
    border-right:2px solid #a6a5a0;
}
.grouping{
    display:flex;
    align-items:center;
    height:23px;
    padding-left:4px;
    background:#a6a5a0;
}
.group-chip{
    display:flex;
    align-items:center;
    gap:4px;
    height:12px;
    padding:0 4px 0 1px;
    background:#e4e2dd;
    border:1px solid #d3d1ca;
}
.grid-area{
    flex:1;
    background:#fff;
    min-height:0;
}
table{
    width:100%;
    border-collapse:separate;
    border-spacing:0;
    table-layout:fixed;
}
td,th{
    overflow:hidden;
    white-space:nowrap;
}
.c-indent{width:10px;}
.c-done{width:34px;}
.c-status{width:42px;}
.c-cat{width:50px;}
.c-comp{width:31px;}
.c-prio{width:37px;}
.c-due{width:42px;}
.c-info{width:45px;}
.tasks th{
    height:12px;
    background:#e5e3de;
    border-right:1px solid #b4b2ac;
    border-bottom:1px solid #b4b2ac;
}
.tasks th:first-child,.tasks th:last-child{
    border-right:none;
}
.cell{
    display:flex;
    align-items:center;
    gap:1px;
}
.spread{
    justify-content:space-between;
    padding:0 1px 0 5px;
}
.tight{
    padding:0 0 0 2px;
}
.drop{
    width:9px;
    height:9px;
    padding:2px;
    background:#d4d0c8;
}
.info-head{
    gap:7px;
    padding-left:3px;
}
.group td{
    height:11px;
    padding-left:2px;
    background:#d4d0c8;
    border-bottom:1px solid #a6a49e;
}
.group .cell{
    gap:2px;
}
.task td{
    height:14px;
    padding-left:1px;
    border-right:1px solid #a6a49e;
    border-bottom:1px solid #a6a49e;
}
.tasks .indent{
    background:#d4d0c8;
    border-bottom-color:#d4d0c8;
    border-right:1px solid #a6a49e;
}
.tasks .mid{
    text-align:center;
}
.task input{
    display:block;
    margin:0 auto;
}
.task .date{
    padding-left:2px;
}
.current td{
    background:#d4d0c8;
}
.memo td{
    height:11px;
    padding-left:12px;
    color:#2a22d0;
    border-bottom:1px solid #a6a49e;
}
.end{
    justify-content:flex-end;
    padding-right:1px;
}
.recur{
    padding-left:11px;
}
input[type=checkbox]{
    appearance:none;
    width:7px;
    height:7px;
    background:#fff;
    border:1px solid #444;
}
input[type=checkbox]:checked::after{
    content:"";
    display:block;
    width:2px;
    height:4px;
    margin:0 auto;
    border:solid #000;
    border-width:0 1px 1px 0;
    transform:rotate(45deg);
}
input[type=radio]{
    appearance:none;
    width:8px;
    height:8px;
    background:#fff;
    border:1px solid #555;
    border-radius:50%;
}
input[type=radio]:checked{
    background:radial-gradient(#000 1px,#fff 2px);
}
.grid-foot{
    height:15px;
    background:#d4d0c8;
}

/* note panel */
.notes{
    display:flex;
    flex-direction:column;
    height:138px;
    border-top:1px solid #a6a49e;
}
.notes .panel-head{
    height:13px;
}
.note-tools,.side-tools{
    display:flex;
    background:linear-gradient(to right,#dedbd4,#f3f2f0);
}
.note-tools{
    padding-bottom:1px;
}
.toolbar .fmt{
    width:10px;
    height:10px;
    margin:0 2px 0 3px;
    color:#1560b8;
    background:#c7e6fb;
    border:1px solid #3c94dc;
}
.editor{
    flex:1;
    display:block;
    width:100%;
    background:#fff;
    border:1px solid #a6a49e;
}
.bottom-tabs{
    display:flex;
    height:15px;
    margin-top:1px;
    padding:0 2px 1px;
    background:linear-gradient(#efeeeb,#d4d0c8);
    border-top:1px solid #5c6fa5;
}
.bottom-tabs button{
    padding:0 2px;
    border-right:1px solid #c5c2ba;
}
.bottom-tabs .active{
    background:#b9c0d8;
    border:1px solid #5c6fa5;
    border-top:none;
}

/* right side */
.side{
    display:flex;
    flex-direction:column;
    width:164px;
    padding:1px 1px 0 1px;
    background:#d4d0c8;
    border-right:1px solid #a6a49e;
}
.cats{
    display:flex;
    flex-direction:column;
    flex:0 1 258px;
}
.side-tools{
    padding:1px 0;
    height:17px;
}
.tree-box{
    flex:1;
    background:#fff;
    border:1px solid #a6a49e;
}
.c-undone{width:29px;}
.c-total{width:19px;}
.tree th{
    height:12px;
    background:#e5e3de;
    border-right:1px solid #b4b2ac;
    border-bottom:1px solid #b4b2ac;
}
.tree th:last-child{
    border-right:none;
}
.tree td{
    height:11px;
    padding-right:1px;
    text-align:right;
    border:solid transparent;
    border-width:1px 0;
    line-height:9px;
}
.tree td:first-child{
    padding:0;
}
.node,.pick{
    display:flex;
    align-items:center;
    gap:2px;
    height:9px;
}
.node{
    padding-left:5px;
}
.node .icon{
    width:10px;
    height:10px;
}
.node .toggle{
    margin-left:-2px;
}
.line{
    width:6px;
    height:11px;
    border-left:1px dotted #999;
    background:linear-gradient(#bbb,#bbb) 0 5px/6px 1px no-repeat;
}
.line.pass{
    background:none;
    margin-right:4px;
}
.line.last{
    height:6px;
    align-self:flex-start;
    background-position:0 5px;
}
.pick{
    flex:1;
    border-left:1px solid #555;
    margin-left:-1px;
}
.tree .picked td{
    border-color:#555;
    background:#d4d0c8;
}
.tree .picked td:first-child{
    background:#fff;
}
.filters{
    flex:1;
    margin-top:3px;
    background:#e5e3de;
}
.c-field{width:63px;}
.c-drop{width:10px;}
.filter-table{
    border:1px solid #a6a49e;
    border-right:none;
}
.filter-table th{
    height:13px;
    padding-left:11px;
    text-align:left;
    border-right:1px solid #a6a49e;
    border-bottom:1px solid #c2c0ba;
}
.filter-table td{
    border-bottom:1px solid #c2c0ba;
    padding-left:1px;
}
.filter-table td:last-child{
    padding-left:0;
}
.set td{
    background:#fff;
    color:#26268c;
    border-top:1px solid #666;
}
.filter-table .set th{
    font-weight:bold;
    border-top:1px solid #666;
    border-left:1px solid #666;
}
.filter-combo{
    width:63px;
}

/* windows */
.window{
    position:absolute;
    padding:1px;
    background:#d4d0c8;
    border:1px solid;
    border-color:#eceae6 #555 #555 #eceae6;
    box-shadow:inset -1px -1px #8a8780;
}
.window-title{
    display:flex;
    align-items:center;
    justify-content:space-between;
    height:12px;
    padding:0 1px;
    color:#d8d5cd;
    background:linear-gradient(to right,#808080,#c2c2c2);
}
.window-title h2{
    font-family:"Open Sans", "Liberation Sans", sans-serif;
    font-weight:bold;
}
.push{
    display:flex;
    align-items:center;
    justify-content:center;
    gap:3px;
    background:#d4d0c8;
    border:1px solid;
    border-color:#fff #555 #555 #fff;
    box-shadow:inset -1px -1px #9a978f;
}
.push:disabled{
    color:#8d8a83;
}
.edit{
    left:142px;
    top:227px;
    width:282px;
    padding-bottom:6px;
}
.page{
    margin:5px 5px 0 4px;
    height:207px;
    background:linear-gradient(#eceae7,#d4d0c8);
}
.tabs{
    display:flex;
    height:13px;
    padding:1px 4px 0;
    background:linear-gradient(#f4f3f1,#dcd9d2);
    border-bottom:1px solid #5c6fa5;
}
.tabs button{
    padding:0 2px 0 3px;
    border-right:1px solid #c5c2ba;
}
.tabs .active{
    padding:0 2px;
    background:#b9c0d8;
    border:1px solid #5c6fa5;
    border-bottom:none;
}
.tabs button:last-child{
    border-right:none;
}
.fields{
    padding:6px 26px 0 11px;
}
.row{
    display:flex;
    align-items:center;
}
.row label{
    white-space:nowrap;
}
.row + .row{
    margin-top:9px;
}
.lead{
    width:23px;
}
.box{
    background:#fff;
    border:1px solid #a5a39c;
    padding:0 1px;
}
.row .box{
    height:12px;
}
.grow{
    flex:1;
}
.w-prio{width:68px;}
.w-status{width:75px;}
.w-time{width:55px;}
.w-est{width:53px;}
.w-date{width:75px;}
.w-clock{width:63px;margin-left:6px;}
.w-rec{width:143px;}
.cat-label{
    width:42px;
    padding-left:9px;
}
.note-label{
    display:block;
    margin-top:5px;
}
.memo-box{
    display:block;
    width:100%;
    height:40px;
    margin:2px 0 9px;
}
.right-label{
    width:55px;
    padding-right:4px;
    text-align:right;
}
.est-label{
    width:46px;
}
.est-label ~ .right-label{
    width:53px;
}
.done-btn{
    width:16px;
    height:16px;
    margin:-2px 0 -2px 3px;
}
.due{
    gap:3px;
}
.row.due{
    padding-left:1px;
}
.rule{
    flex:1;
    height:2px;
    background:#5c6fa5;
}
.row.when{
    margin:6px -20px 0 0;
}
.pick-when{
    display:flex;
    align-items:center;
    gap:3px;
    width:68px;
    padding-left:13px;
}
.dots{
    display:flex;
    gap:1px;
    margin-right:4px;
}
.dots span{
    width:2px;
    height:2px;
    background:#222;
}
.edit-foot{
    display:flex;
    align-items:center;
    gap:11px;
    padding:9px 8px 0 4px;
}
.edit-foot p{
    flex:1;
}
.edit-foot .push{
    width:47px;
    height:16px;
}
.message{
    left:302px;
    top:279px;
    width:196px;
    padding-bottom:9px;
}
.message .window-title{
    color:#fff;
    background:linear-gradient(to right,#0a246a,#a6caf0);
}
.message-body{
    display:flex;
    gap:11px;
    padding:7px 5px 0;
}
.message-body svg{
    width:21px;
    height:23px;
}
.message-body p{
    padding-top:2px;
    white-space:nowrap;
}
.ok{
    width:40px;
    height:15px;
    margin:9px auto 0;
    padding:1px;
    border-color:#333;
}
.ok span{
    flex:1;
    border:1px dotted #555;
}
```
